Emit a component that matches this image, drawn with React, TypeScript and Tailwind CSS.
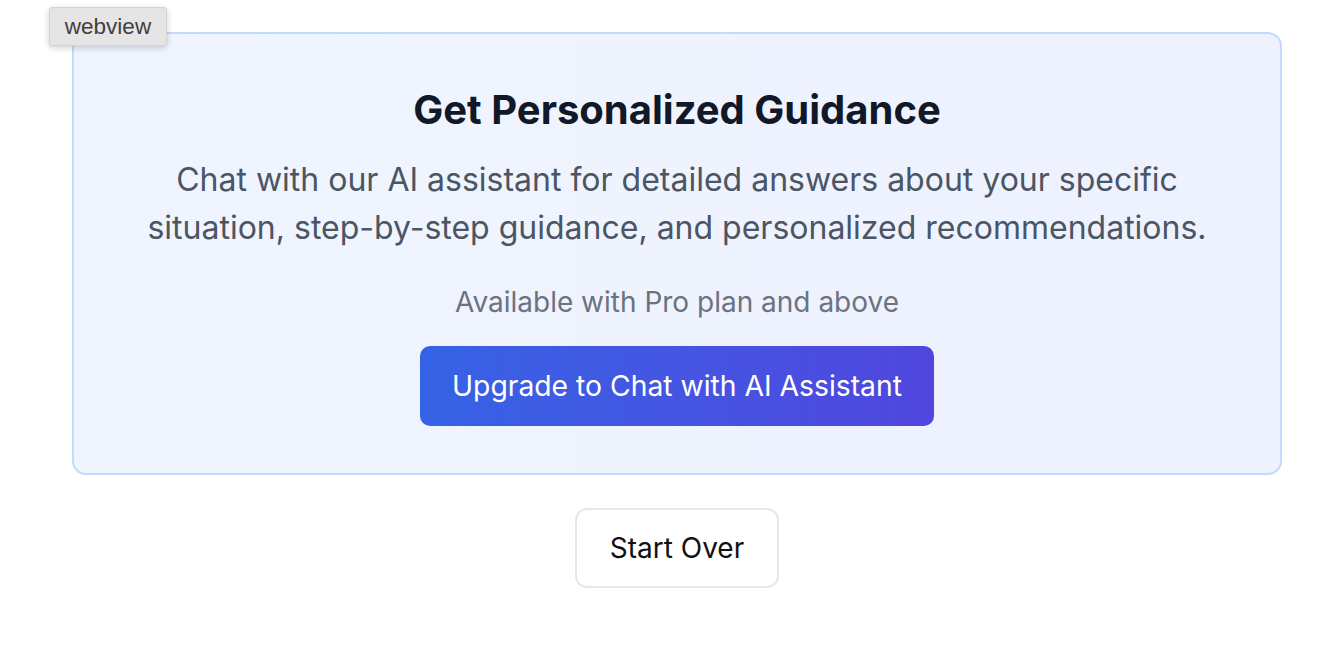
import React from "react";

// Upgrade prompt shown at the end of a guided flow

export default function App() {
  return (
    <div
      className="relative min-h-[652px] bg-white"
      style={{ fontFamily: "Inter, 'Noto Sans', sans-serif" }}
    >
      {/* "webview" debug label, floats over the page */}
      <div className="absolute left-[49px] top-[7px] z-10 flex h-[39px] w-[118px] items-center justify-center rounded-[3px] border border-[#d4d2d2] bg-[#e6e4e4] font-['Liberation_Sans',Arial,sans-serif] text-[22.5px] text-[#404040] shadow-[0_2px_6px_rgba(0,0,0,0.18)]">
        webview
      </div>

      <div className="ml-[72px] flex w-[1210px] flex-col items-center pt-[32px]">
        {/* Upsell card */}
        <div className="flex w-full flex-col items-center rounded-[14px] border-2 border-[#c3dafc] bg-gradient-to-r from-[#eff5ff] to-[#eef1fe] px-12 pt-[49px] pb-[47px] text-center">
          <h2 className="text-[40px] font-bold leading-[54px] text-[#111827]">
            Get Personalized Guidance
          </h2>
          <p className="mt-[19px] max-w-[1100px] text-[32px] leading-[48px] text-[#4b5563]">
            Chat with our AI assistant for detailed answers about your specific situation,
            step-by-step guidance, and personalized recommendations.
          </p>
          <p className="mt-[30px] text-[28px] leading-[40px] text-[#6b7280]">
            Available with Pro plan and above
          </p>
          <button className="mt-[24px] h-[80px] w-[514px] rounded-[10px] bg-gradient-to-r from-[#3563e5] to-[#4f46de] text-[28.3px] font-normal text-white">
            Upgrade to Chat with AI Assistant
          </button>
        </div>

        {/* Secondary action */}
        <button className="mt-[33px] h-[80px] w-[204px] rounded-[12px] border-2 border-[#e5e7eb] bg-white text-[28px] font-normal text-[#111111]">
          Start Over
        </button>
      </div>
    </div>
  );
}
